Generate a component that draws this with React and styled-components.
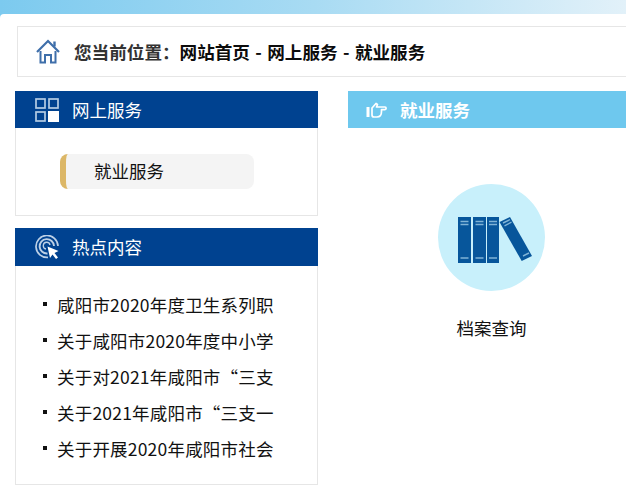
import React from "react";
import styled, { createGlobalStyle } from "styled-components";

const hotList = [
  "咸阳市2020年度卫生系列职",
  "关于咸阳市2020年度中小学",
  "关于对2021年咸阳市“三支",
  "关于2021年咸阳市“三支一",
  "关于开展2020年咸阳市社会",
];

const HomeIcon = () => (
  <svg width="24" height="25" viewBox="0 0 24 25" fill="none" stroke="#3f6faa" strokeWidth="2">
    <path d="M1 13 L12 2 L23 13" strokeWidth="2.2" />
    <path d="M18.5 7.5 V2.5" strokeWidth="2.4" />
    <path d="M4.5 12 V23.5 H9 V16 H15 V23.5 H19.5 V12" />
  </svg>
);

const GridIcon = () => (
  <svg width="24" height="24" viewBox="0 0 24 24" fill="none" stroke="#b4cce4" strokeWidth="1.7">
    <rect x="1" y="1" width="9" height="9" />
    <rect x="14" y="1" width="9" height="9" />
    <rect x="1" y="14" width="9" height="9" />
    <rect x="13" y="13" width="11" height="11" fill="#ffffff" stroke="none" />
  </svg>
);

const HotIcon = () => (
  <svg width="24" height="24" viewBox="0 0 24 24" fill="none" stroke="#bcd0e6">
    <path d="M13 22.4 A11 11 0 1 1 23 11" strokeWidth="1.7" />
    <path d="M12.5 18.5 A7.2 7.2 0 1 1 19 11" strokeWidth="1.9" />
    <path d="M11 14 A3.4 3.4 0 1 1 15 10" strokeWidth="1.3" />
    <path d="M12.5 11.5 L23.5 16 L19.5 18 L23 22.5 L21 24 L17.5 19.5 L15 23 Z" fill="#ffffff" stroke="none" />
  </svg>
);

const HandIcon = () => (
  <svg width="21" height="16" viewBox="0 0 21 16" fill="none" stroke="#ffffff" strokeWidth="1.7">
    <rect x="0.5" y="5" width="3" height="10" fill="#ffffff" stroke="none" />
    <path d="M6 6 L10 1.5 L11.5 2.5 L10.5 5 H19 C20.5 5 20.5 7.6 19 7.6 H15.5 V9.5 C15.5 13 14 15 11 15 H8 C6.5 15 6 14 6 13 Z" strokeLinejoin="round" />
  </svg>
);

const BooksIcon = () => (
  <svg width="76" height="46" viewBox="0 0 76 46" fill="#07569b">
    <rect x="0" y="0" width="13" height="46" />
    <rect x="15" y="0" width="13" height="46" />
    <rect x="29" y="0" width="12" height="46" />
    <polygon points="41.5,5 52,0 74,39 63.7,44" />
    <g stroke="#7fb3d6" strokeWidth="1.4">
      <path d="M2.5 4.5 H10.5 M2.5 7.5 H10.5 M2.5 41 H10.5" />
      <path d="M17.5 4.5 H25.5 M17.5 7.5 H25.5 M17.5 41 H25.5" />
      <path d="M31 4.5 H39 M31 7.5 H39 M31 41 H39" />
      <path d="M45 6 L52 2.6 M46.5 8.8 L53.5 5.2 M65 39 L71 36" />
    </g>
  </svg>
);

const App = () => {
  return (
    <Page>
      <GlobalStyle />
      <TopBar />
      <Main>
        <Breadcrumb>
          <HomeIcon />
          <Crumbs>
            <Label>您当前位置：</Label>
            网站首页 - 网上服务 - 就业服务
          </Crumbs>
        </Breadcrumb>
        <Columns>
          <Sidebar>
            <Panel>
              <PanelHeader>
                <GridIcon />
                网上服务
              </PanelHeader>
              <MenuBody>
                <MenuItem>就业服务</MenuItem>
              </MenuBody>
            </Panel>
            <Panel>
              <PanelHeader $tall>
                <HotIcon />
                热点内容
              </PanelHeader>
              <HotBody>
                {hotList.map((item) => (
                  <HotItem key={item}>{item}</HotItem>
                ))}
              </HotBody>
            </Panel>
          </Sidebar>
          <Content>
            <ContentHeader>
              <HandIcon />
              就业服务
            </ContentHeader>
            <ServiceGrid>
              <Service>
                <ServiceCircle>
                  <BooksIcon />
                </ServiceCircle>
                <ServiceName>档案查询</ServiceName>
              </Service>
            </ServiceGrid>
          </Content>
        </Columns>
      </Main>
    </Page>
  );
};

export default App;

const GlobalStyle = createGlobalStyle`
  html, body {
    margin: 0;
    padding: 0;
    background: #ffffff;
    overflow: hidden;
  }
  * {
    box-sizing: border-box;
  }
`;

const Page = styled.div`
  width: 626px;
  height: 502px;
  overflow: hidden;
  font-family: "Noto Sans CJK SC", "Liberation Sans", sans-serif;
  font-size: 17.5px;
  color: #111111;
  background: linear-gradient(90deg, #7ccaef 0%, #a8dbf3 50%, #e2f1f9 100%);
`;

const TopBar = styled.div`
  height: 14px;
`;

const Main = styled.div`
  height: 488px;
  padding: 12px 0 0 15px;
  background: #ffffff;
  border-top-left-radius: 4px;
`;

const Breadcrumb = styled.div`
  display: flex;
  align-items: center;
  gap: 14px;
  width: 640px;
  height: 51px;
  margin-left: 2px;
  padding-left: 18px;
  background: #ffffff;
  border: 1px solid #e6e6e6;
`;

const Crumbs = styled.div`
  font-size: 17.6px;
  font-weight: 700;
  word-spacing: 1.4px;
  color: #0c0c0c;
  white-space: nowrap;
`;

const Label = styled.span`
  color: #333333;
`;

const Columns = styled.div`
  display: flex;
  gap: 30px;
  margin-top: 14px;
`;

const Sidebar = styled.div`
  display: flex;
  flex-direction: column;
  gap: 12px;
  width: 303px;
  flex-shrink: 0;
`;

const Panel = styled.section`
  display: flex;
  flex-direction: column;
`;

const PanelHeader = styled.div`
  display: flex;
  align-items: center;
  gap: 13px;
  height: ${(p) => (p.$tall ? "38px" : "37px")};
  padding-left: 20px;
  padding-bottom: ${(p) => (p.$tall ? "2px" : "0")};
  background: #004290;
  color: #ffffff;

  svg {
    margin-top: ${(p) => (p.$tall ? "2px" : "0")};
  }
`;

const MenuBody = styled.div`
  height: 88px;
  padding: 26px 0 0 44px;
  border: 1px solid #e6e6e6;
  border-top: none;
`;

const MenuItem = styled.div`
  display: flex;
  align-items: center;
  width: 194px;
  height: 35px;
  padding: 0 0 2px 28px;
  background: #f4f4f4;
  border-left: 6px solid #dcb767;
  border-radius: 8px;
`;

const HotBody = styled.ul`
  height: 219px;
  margin: 0;
  padding: 20px 0 0 27px;
  list-style: none;
  border: 1px solid #e6e6e6;
  border-top: none;
`;

const HotItem = styled.li`
  display: flex;
  align-items: center;
  gap: 10px;
  height: 36px;
  letter-spacing: 0.2px;
  white-space: nowrap;

  &::before {
    content: "";
    flex-shrink: 0;
    width: 4px;
    height: 4px;
    background: #111111;
  }
`;

const Content = styled.div`
  flex: 1;
  min-width: 0;
`;

const ContentHeader = styled.div`
  display: flex;
  align-items: center;
  gap: 13px;
  height: 37px;
  padding-left: 18px;
  background: #6ec8ee;
  color: #ffffff;
  font-weight: 700;
`;

const ServiceGrid = styled.div`
  display: flex;
  padding: 56px 0 0 90px;
`;

const Service = styled.div`
  display: flex;
  flex-direction: column;
  align-items: center;
  gap: 23px;
  width: 107px;
`;

const ServiceCircle = styled.div`
  display: flex;
  align-items: center;
  justify-content: center;
  width: 107px;
  height: 107px;
  padding: 5px 0 0 8px;
  border-radius: 50%;
  background: #c8f0fb;
`;

const ServiceName = styled.div`
  line-height: 28px;
  white-space: nowrap;
`;
